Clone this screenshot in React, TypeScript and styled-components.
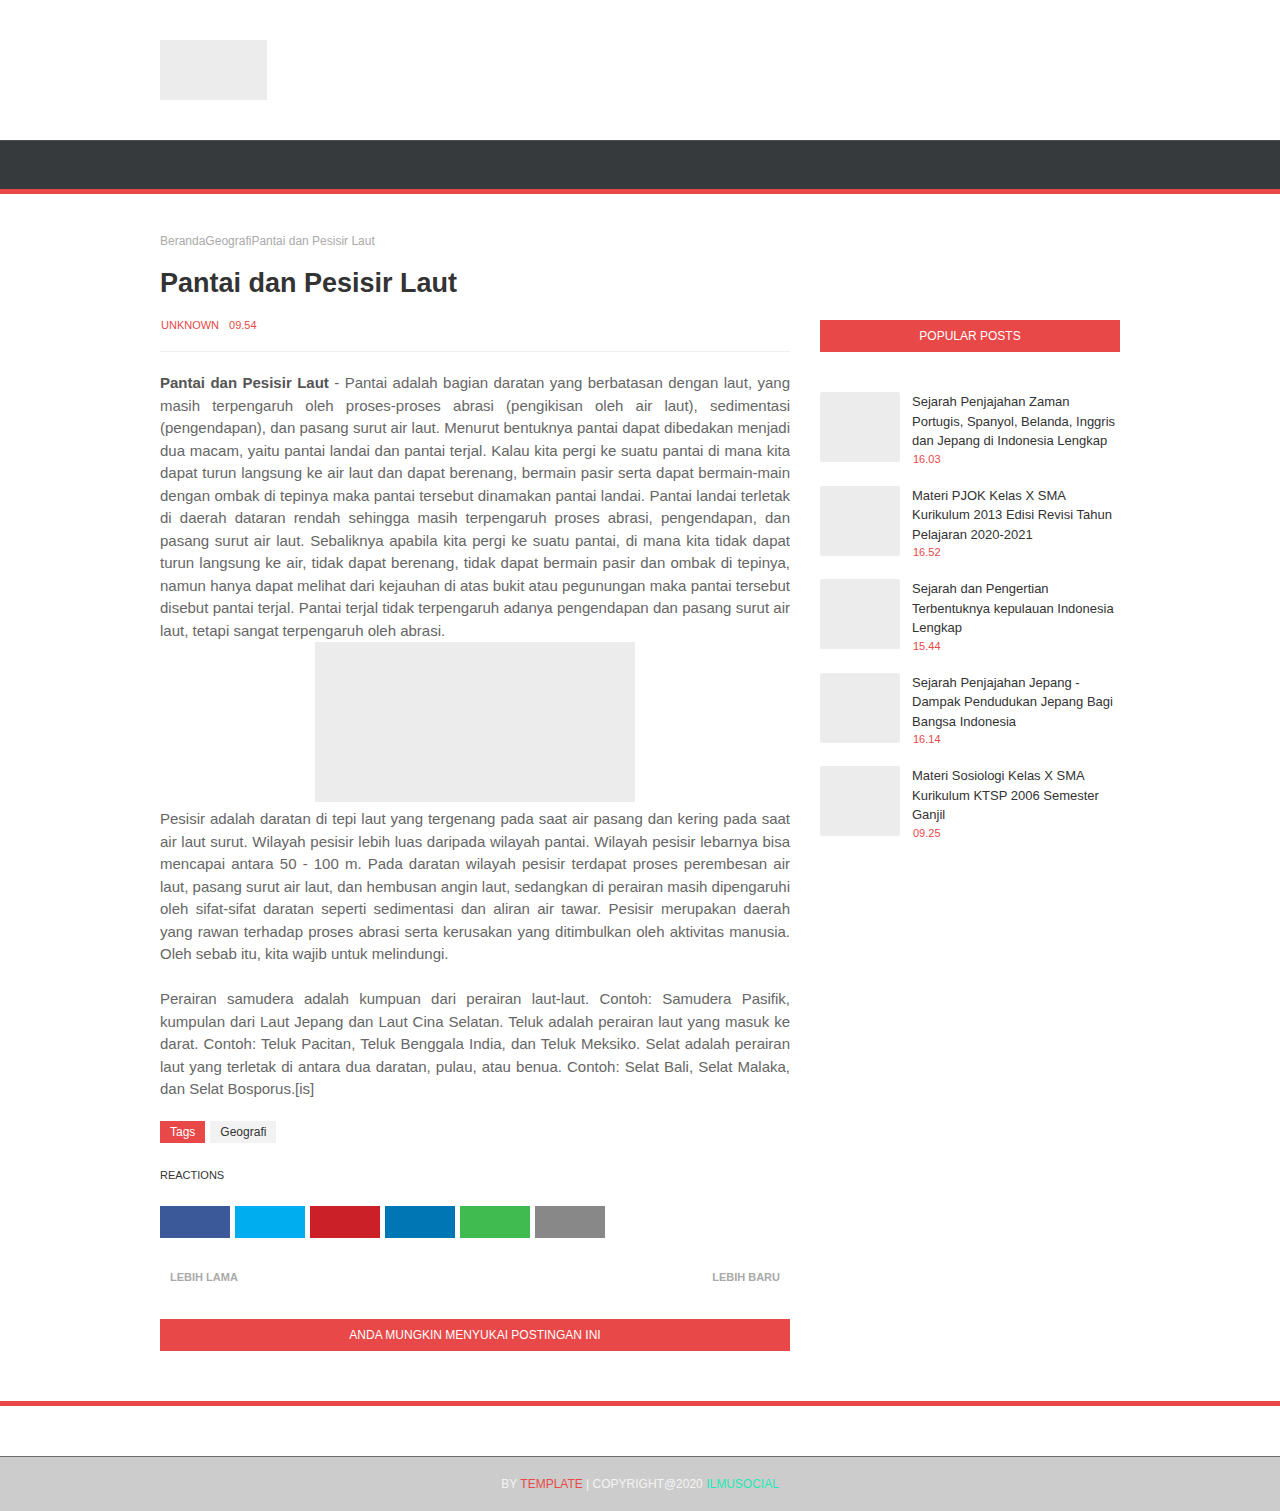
import React from "react";
import styled, { createGlobalStyle } from "styled-components";

const RED = "#e84848";

const Global = createGlobalStyle`
  html, body { margin: 0; padding: 0; background: #fff; }
  body { font-family: "Liberation Sans", Arial, sans-serif; color: #333; }
  * { box-sizing: border-box; }
`;

const Header = styled.header`
  height: 140px;
  padding-top: 40px;
`;

const Wrap = styled.div`
  width: 960px;
  margin: 0 auto;
`;

const Logo = styled.div`
  width: 107px;
  height: 60px;
  background: #ececec;
`;

const Nav = styled.nav`
  height: 54px;
  background: #373a3d;
  border-top: 1px solid #4b4e51;
  border-bottom: 5px solid ${RED};
`;

const Content = styled.div`
  width: 960px;
  margin: 0 auto;
  display: flex;
  gap: 30px;
  align-items: flex-start;
`;

const Main = styled.main`
  width: 630px;
  padding-top: 40px;
`;

const Breadcrumb = styled.div`
  font-size: 12px;
  line-height: 14px;
  color: #aaa;
`;

const Title = styled.h1`
  margin: 19px 0 0;
  font-size: 27px;
  line-height: 32px;
  font-weight: bold;
  color: #333;
`;

const Meta = styled.div`
  margin-top: 19px;
  padding: 0 0 19px 1px;
  border-bottom: 1px solid #eee;
  display: flex;
  gap: 10px;
  font-size: 11px;
  line-height: 14px;
  color: ${RED};
`;

const Body = styled.div`
  margin-top: 20px;
  font-size: 15px;
  line-height: 22.5px;
  color: #666;
  text-align: justify;
  p { margin: 0; }
  strong { color: #555; }
`;

const Gap = styled.div`
  height: 22.5px;
`;

const Figure = styled.div`
  width: 320px;
  height: 160px;
  margin: 0 auto 6px;
  background: #ececec;
`;

const Tags = styled.div`
  margin-top: 20px;
  display: flex;
  gap: 5px;
`;

const Tag = styled.span<{ $primary?: boolean }>`
  height: 22px;
  line-height: 22px;
  padding: 0 10px;
  font-size: 12px;
  background: ${(p) => (p.$primary ? RED : "#f2f2f2")};
  color: ${(p) => (p.$primary ? "#fff" : "#333")};
`;

const Reactions = styled.div`
  margin-top: 25px;
  font-size: 11px;
  line-height: 14px;
  color: #333;
`;

const Shares = styled.div`
  margin-top: 24px;
  display: flex;
  gap: 5px;
`;

const Share = styled.span<{ $bg: string }>`
  width: 70px;
  height: 32px;
  background: ${(p) => p.$bg};
`;

const Pager = styled.div`
  margin-top: 32px;
  padding: 0 10px;
  display: flex;
  justify-content: space-between;
  font-size: 11px;
  line-height: 14px;
  font-weight: bold;
  color: #aaa;
`;

const Bar = styled.div<{ $top: number }>`
  margin-top: ${(p) => p.$top}px;
  height: 32px;
  line-height: 32px;
  background: ${RED};
  color: #fff;
  font-size: 12px;
  text-align: center;
`;

const Side = styled.aside`
  width: 300px;
  padding-top: 126px;
`;

const PostList = styled.div`
  margin-top: 40px;
  display: flex;
  flex-direction: column;
  gap: 18px;
`;

const Item = styled.div`
  display: flex;
  gap: 12px;
`;

const Thumb = styled.div`
  flex: none;
  width: 80px;
  height: 70px;
  border-radius: 2px;
  background: #ececec;
`;

const ItemText = styled.div`
  flex: 1;
`;

const ItemTitle = styled.div`
  font-size: 13px;
  line-height: 19.5px;
  color: #333;
`;

const ItemDate = styled.div`
  padding-left: 1px;
  font-size: 11px;
  line-height: 17px;
  color: ${RED};
`;

const Footer = styled.footer`
  margin-top: 50px;
  border-top: 5px solid ${RED};
  padding-top: 50px;
`;

const Copy = styled.div`
  border-top: 1px solid #676d6c;
  background: #ccc;
  height: 55px;
  display: flex;
  align-items: center;
  justify-content: center;
  font-size: 12px;
  color: #f4f4f4;
  white-space: pre;
`;

const Hl = styled.span<{ $c: string }>`
  color: ${(p) => p.$c};
`;

const posts = [
  ["Sejarah Penjajahan Zaman Portugis, Spanyol, Belanda, Inggris dan Jepang di Indonesia Lengkap", "16.03"],
  ["Materi PJOK Kelas X SMA Kurikulum 2013 Edisi Revisi Tahun Pelajaran 2020-2021", "16.52"],
  ["Sejarah dan Pengertian Terbentuknya kepulauan Indonesia Lengkap", "15.44"],
  ["Sejarah Penjajahan Jepang - Dampak Pendudukan Jepang Bagi Bangsa Indonesia", "16.14"],
  ["Materi Sosiologi Kelas X SMA Kurikulum KTSP 2006 Semester Ganjil", "09.25"],
];

const shares = ["#3b5998", "#00aeef", "#cb2027", "#0077b5", "#40bb50", "#888888"];

export default function App() {
  return (
    <>
      <Global />
      <Header>
        <Wrap>
          <Logo />
        </Wrap>
      </Header>
      <Nav />
      <Content>
        <Main>
          <Breadcrumb>BerandaGeografiPantai dan Pesisir Laut</Breadcrumb>
          <Title>Pantai dan Pesisir Laut</Title>
          <Meta>
            <span>UNKNOWN</span>
            <span>09.54</span>
          </Meta>
          <Body>
            <p>
              <strong>Pantai dan Pesisir Laut</strong> - Pantai adalah bagian daratan yang berbatasan dengan laut, yang masih terpengaruh oleh proses-proses abrasi (pengikisan oleh air laut), sedimentasi (pengendapan), dan pasang surut air laut. Menurut bentuknya pantai dapat dibedakan menjadi dua macam, yaitu pantai landai dan pantai terjal. Kalau kita pergi ke suatu pantai di mana kita dapat turun langsung ke air laut dan dapat berenang, bermain pasir serta dapat bermain-main dengan ombak di tepinya maka pantai tersebut dinamakan pantai landai. Pantai landai terletak di daerah dataran rendah sehingga masih terpengaruh proses abrasi, pengendapan, dan pasang surut air laut. Sebaliknya apabila kita pergi ke suatu pantai, di mana kita tidak dapat turun langsung ke air, tidak dapat berenang, tidak dapat bermain pasir dan ombak di tepinya, namun hanya dapat melihat dari kejauhan di atas bukit atau pegunungan maka pantai tersebut disebut pantai terjal. Pantai terjal tidak terpengaruh adanya pengendapan dan pasang surut air laut, tetapi sangat terpengaruh oleh abrasi.
            </p>
            <Figure />
            <p>
              Pesisir adalah daratan di tepi laut yang tergenang pada saat air pasang dan kering pada saat air laut surut. Wilayah pesisir lebih luas daripada wilayah pantai. Wilayah pesisir lebarnya bisa mencapai antara 50 - 100 m. Pada daratan wilayah pesisir terdapat proses perembesan air laut, pasang surut air laut, dan hembusan angin laut, sedangkan di perairan masih dipengaruhi oleh sifat-sifat daratan seperti sedimentasi dan aliran air tawar. Pesisir merupakan daerah yang rawan terhadap proses abrasi serta kerusakan yang ditimbulkan oleh aktivitas manusia. Oleh sebab itu, kita wajib untuk melindungi.
            </p>
            <Gap />
            <p>
              Perairan samudera adalah kumpuan dari perairan laut-laut. Contoh: Samudera Pasifik, kumpulan dari Laut Jepang dan Laut Cina Selatan. Teluk adalah perairan laut yang masuk ke darat. Contoh: Teluk Pacitan, Teluk Benggala India, dan Teluk Meksiko. Selat adalah perairan laut yang terletak di antara dua daratan, pulau, atau benua. Contoh: Selat Bali, Selat Malaka, dan Selat Bosporus.[is]
            </p>
          </Body>
          <Tags>
            <Tag $primary>Tags</Tag>
            <Tag>Geografi</Tag>
          </Tags>
          <Reactions>REACTIONS</Reactions>
          <Shares>
            {shares.map((c) => (
              <Share key={c} $bg={c} />
            ))}
          </Shares>
          <Pager>
            <span>LEBIH LAMA</span>
            <span>LEBIH BARU</span>
          </Pager>
          <Bar $top={35}>ANDA MUNGKIN MENYUKAI POSTINGAN INI</Bar>
        </Main>
        <Side>
          <Bar $top={0}>POPULAR POSTS</Bar>
          <PostList>
            {posts.map(([t, d]) => (
              <Item key={t}>
                <Thumb />
                <ItemText>
                  <ItemTitle>{t}</ItemTitle>
                  <ItemDate>{d}</ItemDate>
                </ItemText>
              </Item>
            ))}
          </PostList>
        </Side>
      </Content>
      <Footer>
        <Copy>
          {"BY "}<Hl $c={RED}>TEMPLATE</Hl>{" | COPYRIGHT@2020 "}<Hl $c="#1de9b6">ILMUSOCIAL</Hl>
        </Copy>
      </Footer>
    </>
  );
}
